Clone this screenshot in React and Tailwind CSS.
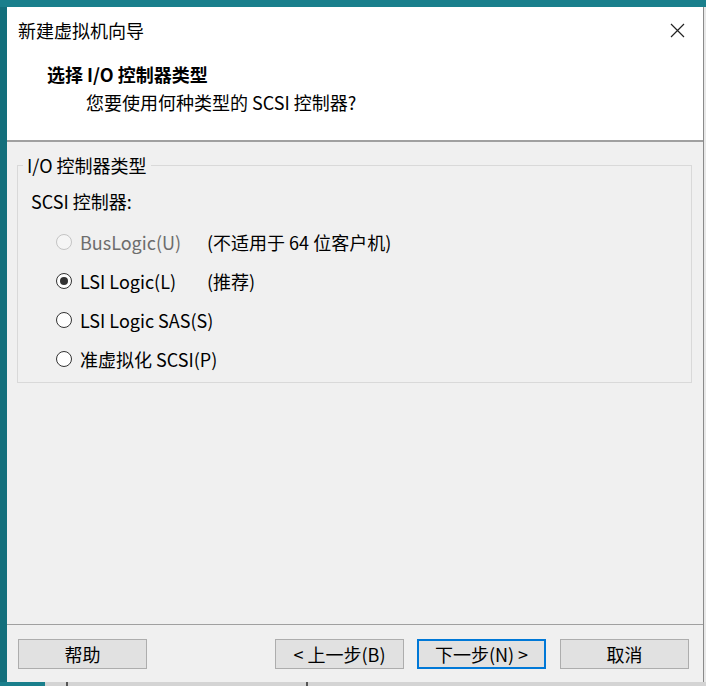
import React from 'react';

const font = { fontFamily: '"Microsoft YaHei", "Noto Sans CJK SC", "Noto Sans", sans-serif' };

const Radio = ({ checked, disabled }) => (
  <span
    className={`w-4 h-4 rounded-full border flex items-center justify-center shrink-0 ${
      disabled ? 'border-[#c4c4c4] bg-[#f5f5f5]' : 'border-[#333333] bg-white'
    }`}
  >
    {checked && <span className="w-2 h-2 rounded-full bg-[#333333]" />}
  </span>
);

const options = [
  { label: 'BusLogic(U)', note: '(不适用于 64 位客户机)', disabled: true },
  { label: 'LSI Logic(L)', note: '(推荐)', checked: true },
  { label: 'LSI Logic SAS(S)' },
  { label: '准虚拟化 SCSI(P)' },
];

const Btn = ({ children, primary, className = '' }) => (
  <button
    className={`h-[30px] w-[129px] bg-[#e1e1e1] text-[18px] leading-[20px] text-black flex items-center justify-center ${
      primary ? 'border-2 border-[#0078d7]' : 'border border-[#adadad]'
    } ${className}`}
  >
    {children}
  </button>
);

export default function App() {
  return (
    <div className="w-[706px] h-[686px] bg-[#1a7f8c] flex flex-col overflow-hidden" style={font}>
      <div className="h-[7px] shrink-0" />
      <div className="flex flex-1 min-h-0">
        <div className="w-[7px] shrink-0 bg-[#136f7c]" />
        <div className="w-[697px] flex flex-col bg-[#f0f0f0] border-r border-[#8a8a8a]">
          {/* title bar + header */}
          <div className="bg-white">
            <div className="h-[46px] flex items-center justify-between pl-[11px] pr-[18px]">
              <span className="text-[18px] leading-[20px] text-black">新建虚拟机向导</span>
              <svg width="15" height="15" viewBox="0 0 15 15">
                <path d="M1 1 L14 14 M14 1 L1 14" stroke="#222" strokeWidth="1.2" />
              </svg>
            </div>
            <div className="pl-[40px] pt-[11px] pb-[28px]">
              <div className="text-[18px] leading-[20px] font-bold text-black">选择 I/O 控制器类型</div>
              <div className="mt-[8px] pl-[39px] text-[18px] leading-[20px] text-black">您要使用何种类型的 SCSI 控制器?</div>
            </div>
          </div>
          <div className="h-[2px] bg-[#a0a0a0]" />

          {/* body */}
          <fieldset className="mt-[13px] ml-[10px] mr-[11px] h-[228px] border border-[#d9d9d9] pl-[5px]">
            <legend className="px-[4px] text-[18px] leading-[20px] text-black">I/O 控制器类型</legend>
            <div className="ml-[8px] mt-[16px] text-[18px] leading-[20px] text-black">SCSI 控制器:</div>
            <div className="mt-[21px] flex flex-col gap-[19px] pl-[33px]">
              {options.map((o) => (
                <div key={o.label} className="flex items-center h-[20px] whitespace-nowrap">
                  <Radio checked={o.checked} disabled={o.disabled} />
                  <span
                    className={`ml-[8px] w-[127px] shrink-0 text-[18px] leading-[20px] ${
                      o.disabled ? 'text-[#6d6d6d]' : 'text-black'
                    }`}
                  >
                    {o.label}
                  </span>
                  {o.note && <span className="text-[18px] leading-[20px] text-black">{o.note}</span>}
                </div>
              ))}
            </div>
          </fieldset>

          {/* footer */}
          <div className="mt-auto border-t border-[#a0a0a0] pt-[14px] pb-[13px] pl-[11px] pr-[14px] flex items-center">
            <Btn>帮助</Btn>
            <Btn className="ml-auto">&lt; 上一步(B)</Btn>
            <Btn primary className="ml-[13px]">下一步(N) &gt;</Btn>
            <Btn className="ml-[14px]">取消</Btn>
          </div>
        </div>
        <div className="w-[2px] shrink-0 bg-[#e8e8e8]" />
      </div>
      <div className="h-[4px] shrink-0 flex">
        <div className="w-[45px] bg-[#1a7f8c]" />
        <div className="flex-1 bg-[#d4d4d4] flex">
          <div className="ml-[21px] w-[2px] bg-[#555]" />
          <div className="ml-[238px] w-[2px] bg-[#555]" />
        </div>
      </div>
    </div>
  );
}
